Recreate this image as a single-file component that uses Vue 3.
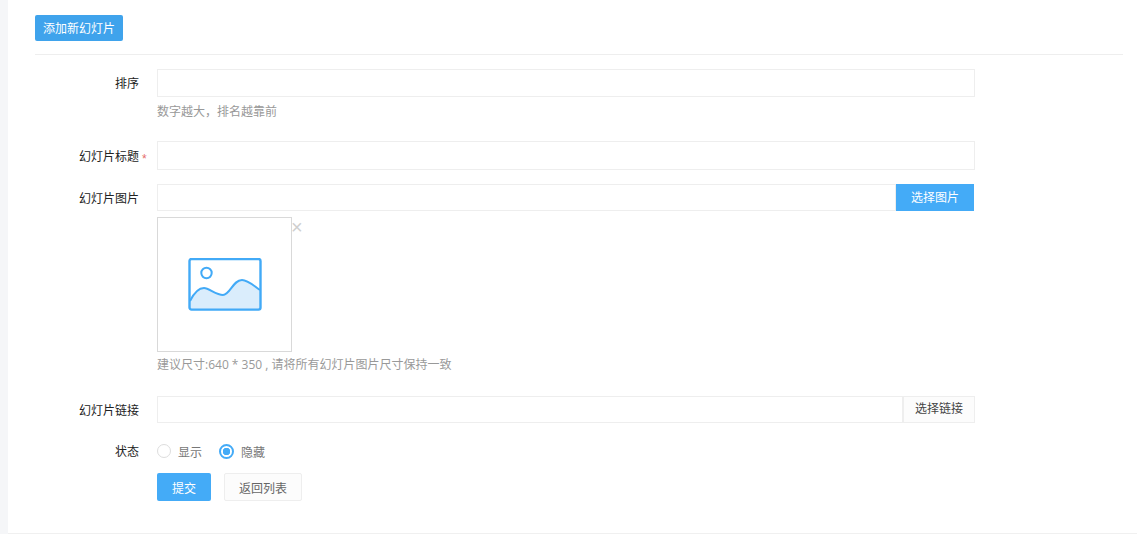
<template>
  <div class="page">
    <div class="side"></div>
    <div class="main">
      <div class="top">
        <a class="btn-add">添加新幻灯片</a>
      </div>
      <form class="form" @submit.prevent>
        <div class="row row-sort">
          <label class="label">排序</label>
          <div class="field">
            <input class="input h28" v-model="sort" />
            <div class="help">数字越大，排名越靠前</div>
          </div>
        </div>
        <div class="row row-title">
          <label class="label">幻灯片标题<span class="star">*</span></label>
          <div class="field">
            <input class="input h29" />
          </div>
        </div>
        <div class="row row-image">
          <label class="label">幻灯片图片</label>
          <div class="field">
            <div class="group">
              <input class="input h27" />
              <span class="btn-pick">选择图片</span>
            </div>
            <div class="preview-wrap">
              <div class="preview">
                <svg width="74" height="54" viewBox="0 0 74 54">
                  <path d="M2 43 C6 35 11 30 16 30 C21 30 28 37 35 37 C42 37 45 22 54 22 C60 22 66 28 72 32 L72 51 Q72 52 71 52 L3 52 Q2 52 2 51 Z" fill="#daedfc" />
                  <path d="M2 43 C6 35 11 30 16 30 C21 30 28 37 35 37 C42 37 45 22 54 22 C60 22 66 28 72 32" fill="none" stroke="#42aaf7" stroke-width="2" />
                  <rect x="1.5" y="1" width="71" height="50.6" rx="2" fill="none" stroke="#42aaf7" stroke-width="2.4" />
                  <circle cx="18.5" cy="15" r="5.2" fill="none" stroke="#42aaf7" stroke-width="2" />
                </svg>
              </div>
              <span class="close">×</span>
            </div>
            <div class="help help-image">建议尺寸:640 * 350 , 请将所有幻灯片图片尺寸保持一致</div>
          </div>
        </div>
        <div class="row row-link">
          <label class="label">幻灯片链接</label>
          <div class="field">
            <div class="group">
              <input class="input h27" />
              <span class="btn-link">选择链接</span>
            </div>
          </div>
        </div>
        <div class="row row-status">
          <label class="label">状态</label>
          <div class="field radios">
            <span v-for="o in options" :key="o.value" class="radio" @click="status = o.value">
              <i class="dot" :class="{ on: status === o.value }"></i>{{ o.text }}
            </span>
          </div>
        </div>
        <div class="row row-actions">
          <div class="label"></div>
          <div class="field actions">
            <button class="btn-submit">提交</button>
            <button class="btn-back">返回列表</button>
          </div>
        </div>
      </form>
    </div>
  </div>
</template>

<script setup>
import { ref } from 'vue'

const sort = ref('')
const status = ref(0)
const options = [
  { value: 1, text: '显示' },
  { value: 0, text: '隐藏' }
]
</script>

<style>
html, body {
  margin: 0;
  background: #fff;
}
</style>

<style scoped>
.page {
  display: flex;
  height: 534px;
  overflow: hidden;
  font-family: "Liberation Sans", "Noto Sans CJK SC", sans-serif;
  font-size: 12px;
  color: #333;
  background: #fff;
}
.side {
  width: 8px;
  flex: none;
  background: #f5f6f8;
}
.main {
  flex: 1;
  padding: 15px 14px 0 27px;
  height: 518px;
  border-bottom: 1px solid #f0f0f0;
}
.top {
  height: 39px;
  border-bottom: 1px solid #eeeeee;
}
.btn-add {
  display: inline-block;
  width: 88px;
  height: 26px;
  line-height: 28px;
  text-align: center;
  color: #fff;
  background: #3fa3ec;
  border-radius: 2px;
}
.form {
  padding-top: 14px;
}
.row {
  display: flex;
}
.label {
  width: 104px;
  flex: none;
  margin-right: 18px;
  text-align: right;
  color: #222;
  position: relative;
  line-height: 30px;
}
.star {
  position: absolute;
  left: 107px;
  top: 2px;
  color: #e56b6b;
}
.field {
  width: 818px;
}
.input {
  display: block;
  width: 100%;
  box-sizing: border-box;
  border: 1px solid #eeeeee;
  background: #fff;
  padding: 0 8px;
  outline: none;
}
.h27 { height: 27px; }
.h28 { height: 28px; }
.h29 { height: 29px; }
.help {
  margin-top: 8px;
  line-height: 14px;
  color: #999;
}
.row-title {
  margin-top: 22px;
}
.row-title .label {
  height: 29px;
  line-height: 33px;
}
.row-image {
  margin-top: 14px;
}
.group {
  display: flex;
}
.group .input {
  flex: 1;
  min-width: 0;
}
.btn-pick {
  width: 78px;
  height: 27px;
  line-height: 29px;
  flex: none;
  margin-right: 1px;
  text-align: center;
  color: #fff;
  background: #44abf7;
}
.btn-link {
  width: 72px;
  height: 27px;
  line-height: 25px;
  flex: none;
  box-sizing: border-box;
  text-align: center;
  color: #444;
  background: #fcfcfc;
  border: 1px solid #eeeeee;
  margin-left: 0;
}
.preview-wrap {
  position: relative;
  margin-top: 6px;
  width: 135px;
}
.preview {
  box-sizing: border-box;
  width: 135px;
  height: 135px;
  border: 1px solid #d9d9d9;
  display: flex;
  align-items: center;
  justify-content: center;
}
.close {
  position: absolute;
  left: 134px;
  top: 0;
  font-size: 20px;
  line-height: 20px;
  color: #cfcfcf;
  font-family: "Liberation Sans", sans-serif;
}
.help-image {
  margin-top: 6px;
  font-family: "Open Sans", "Noto Sans CJK SC", sans-serif;
}
.row-link {
  margin-top: 24px;
}
.row-link .label {
  height: 28px;
  line-height: 30px;
}
.row-status {
  margin-top: 17px;
}
.row-status .label {
  line-height: 22px;
}
.radios {
  display: flex;
  align-items: center;
  height: 22px;
  gap: 17px;
  position: relative;
  top: -1px;
}
.radio {
  display: flex;
  align-items: center;
  color: #777;
}
.dot {
  display: block;
  box-sizing: border-box;
  width: 14px;
  height: 14px;
  margin-right: 7px;
  border-radius: 50%;
  border: 1px solid #dddddd;
  background: #fff;
}
.dot.on {
  width: 15px;
  height: 15px;
  border: 2px solid #44abf7;
  background: radial-gradient(circle, #44abf7 0 3.5px, #fff 4px);
}
.row-actions {
  margin-top: 10px;
}
.actions {
  display: flex;
  gap: 13px;
}
.btn-submit,
.btn-back {
  font: inherit;
  height: 28px;
  padding: 0;
  border-radius: 2px;
  cursor: pointer;
}
.btn-submit {
  width: 54px;
  border: 0;
  color: #fff;
  background: #44abf7;
}
.btn-back {
  width: 78px;
  border: 1px solid #eeeeee;
  color: #666;
  background: #fcfcfc;
}
</style>
